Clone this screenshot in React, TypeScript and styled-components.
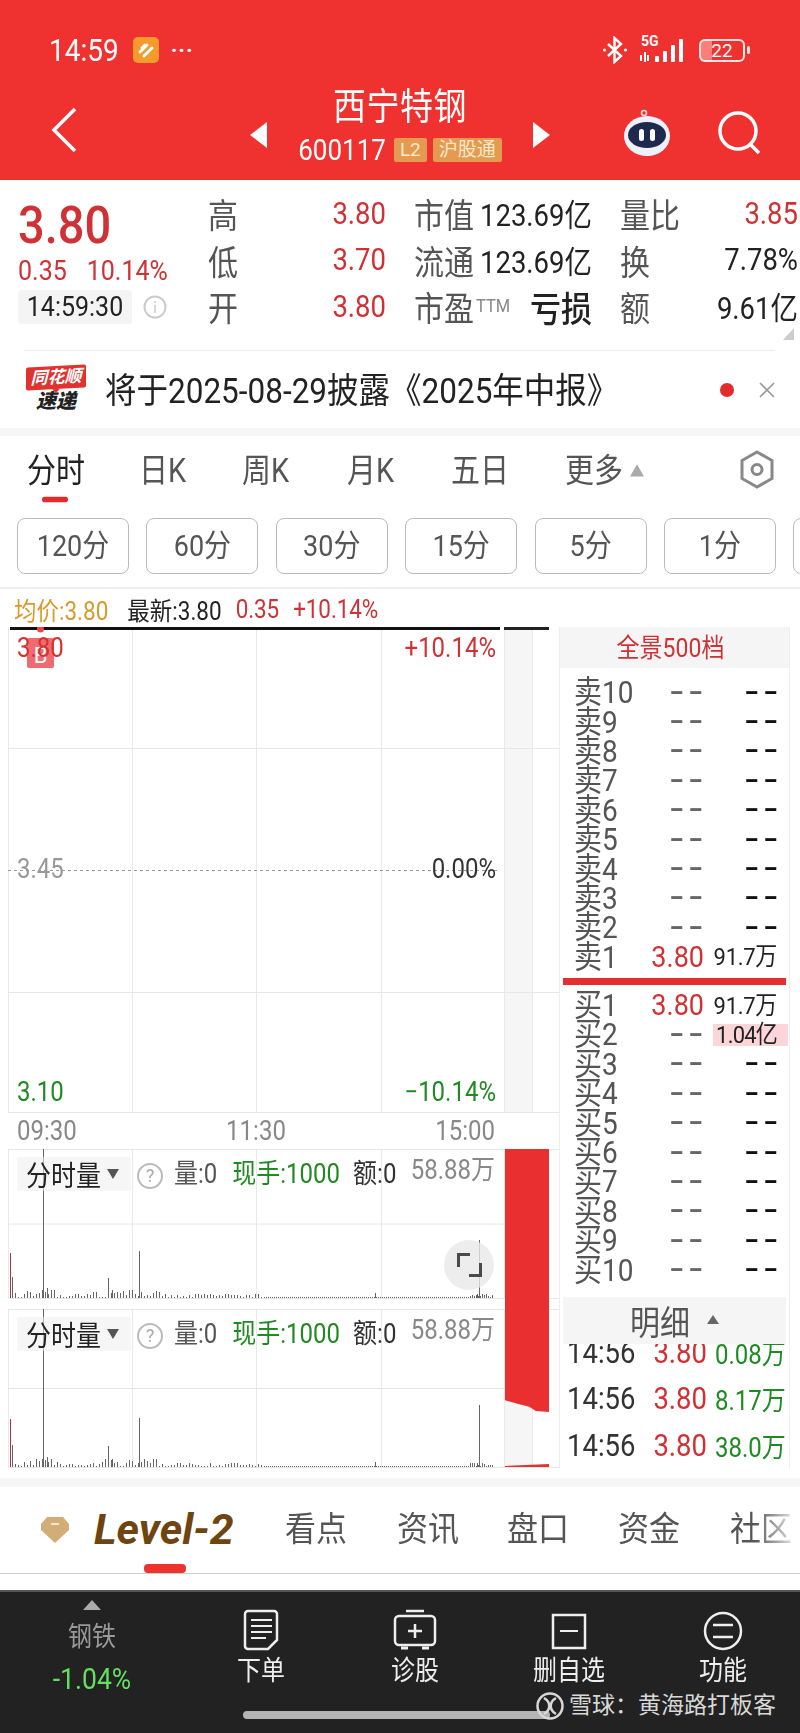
import React from 'react';
import styled, { createGlobalStyle, css } from 'styled-components';

const RED = '#ef3230';
const UP = '#cf3134';
const DOWN = '#1f8a22';

// the app's digits and glyphs run narrow and tall
const tall = css`
  display: inline-block;
  transform: scaleY(1.12);
`;

const GlobalStyle = createGlobalStyle`
  html, body {
    margin: 0;
    padding: 0;
    background: #fff;
  }
  body {
    font-family: Roboto, "Noto Sans CJK SC", sans-serif;
  }
`;

const Page = styled.div`
  position: relative;
  width: 800px;
  height: 1733px;
  overflow: hidden;
  display: flex;
  flex-direction: column;
  background: #fff;
`;

/* header */
const Header = styled.header`
  height: 180px;
  flex: none;
  background: ${RED};
  color: #fff;
`;

const StatusBar = styled.div`
  height: 92px;
  padding: 8px 55px 0 49px;
  box-sizing: border-box;
  display: flex;
  align-items: center;
`;

const Clock = styled.span`
  ${tall}
  font-size: 28px;
  margin-right: 14px;
`;

const StatusDots = styled.span`
  font-size: 22px;
  font-weight: 700;
  letter-spacing: 1px;
  margin-left: 12px;
`;

const StatusRight = styled.div`
  margin-left: auto;
  display: flex;
  align-items: center;
  gap: 12px;
`;

const Network = styled.div`
  position: relative;
  width: 46px;
  height: 28px;
`;

const FiveG = styled.span`
  position: absolute;
  left: 1px;
  top: -3px;
  font-size: 14px;
  font-weight: 700;
  line-height: 16px;
`;

const Battery = styled.div`
  position: relative;
  width: 46px;
  height: 23px;
  margin-left: 1px;
  border: 2px solid rgba(255, 255, 255, 0.85);
  border-radius: 6px;
  box-sizing: border-box;
  display: flex;
  align-items: center;
  justify-content: center;
  font-size: 19px;
  background: linear-gradient(90deg, #ff7f78 0 26%, transparent 26%);

  &::after {
    content: '';
    position: absolute;
    right: -7px;
    top: 5px;
    width: 3px;
    height: 8px;
    border-radius: 2px;
    background: rgba(255, 255, 255, 0.85);
  }
`;

const NavBar = styled.div`
  height: 88px;
  display: grid;
  grid-template-columns: 250px 300px 1fr;
  align-items: start;
`;

const BackSlot = styled.div`
  padding: 15px 0 0 50px;
`;

const NavCenter = styled.div`
  display: flex;
  align-items: center;
  justify-content: space-between;
`;

const Arrow = styled.div<{ $right?: boolean }>`
  width: 0;
  height: 0;
  margin-top: 10px;
  border-top: 13px solid transparent;
  border-bottom: 13px solid transparent;
  ${({ $right }) =>
    $right ? 'border-left: 17px solid #fff;' : 'border-right: 17px solid #fff;'}
`;

const TitleStack = styled.div`
  display: flex;
  flex-direction: column;
  align-items: center;
`;

const StockName = styled.div`
  ${tall}
  font-size: 33px;
  line-height: 40px;
  letter-spacing: 0.5px;
  margin-top: -4px;
`;

const CodeRow = styled.div`
  display: flex;
  align-items: center;
  gap: 6px;
  margin-top: 4px;
`;

const Code = styled.span`
  ${tall}
  font-size: 26px;
  line-height: 36px;
  margin-right: 2px;
`;

const Badge = styled.span`
  height: 24px;
  padding: 0 6px;
  background: #e59a52;
  color: #ffe9c9;
  font-size: 19px;
  line-height: 24px;
  border-radius: 2px;
`;

const NavRight = styled.div`
  display: flex;
  align-items: center;
  padding: 17px 0 0 72px;
  gap: 46px;
`;

/* quote summary */
const Quote = styled.section`
  height: 170px;
  flex: none;
  box-sizing: border-box;
  padding: 10px 0 0 18px;
  position: relative;
  display: flex;
`;

const QuoteLeft = styled.div`
  width: 190px;
  flex: none;
  padding-top: 5px;
`;

const BigPrice = styled.div`
  font-size: 47px;
  font-weight: 500;
  line-height: 60px;
  color: ${UP};
  transform: scaleY(1.12);
`;

const ChangeRow = styled.div`
  display: flex;
  gap: 20px;
  font-size: 25px;
  line-height: 34px;
  color: ${UP};
  margin-top: -1px;

  span {
    ${tall}
  }
`;

const TimeRow = styled.div`
  display: flex;
  align-items: center;
  gap: 11px;
  margin-top: 2px;
`;

const TimeChip = styled.div`
  width: 114px;
  height: 34px;
  background: #f4f4f4;
  border-radius: 4px;
  text-align: center;

  span {
    ${tall}
    font-size: 25px;
    line-height: 34px;
    color: #222;
  }
`;

const StatsGrid = styled.div`
  display: grid;
  grid-template-columns: repeat(3, 178px);
  grid-auto-rows: 46.5px;
  column-gap: 28px;
`;

const Stat = styled.div`
  display: flex;
  align-items: center;
  justify-content: space-between;
  white-space: nowrap;
`;

const StatLabel = styled.span`
  ${tall}
  font-size: 30px;
  color: #555;
`;

const Ttm = styled.span`
  display: inline-block;
  font-size: 16.5px;
  line-height: 20px;
  color: #888;
  margin-left: 2px;
  vertical-align: 8px;
`;

const StatValue = styled.span<{ $up?: boolean; $bold?: boolean }>`
  ${tall}
  font-size: ${({ $bold }) => ($bold ? '31px' : '27.5px')};
  font-weight: ${({ $bold }) => ($bold ? 500 : 400)};
  color: ${({ $up }) => ($up ? UP : '#222')};
`;

const CornerMark = styled.div`
  position: absolute;
  right: 6px;
  bottom: 10px;
  width: 0;
  height: 0;
  border-bottom: 12px solid #ccc;
  border-left: 11px solid transparent;
`;

/* notice */
const Notice = styled.section`
  height: 78px;
  flex: none;
  margin: 0 25px 0 24px;
  border-top: 1px solid #eee;
  box-sizing: border-box;
  display: flex;
  align-items: center;
`;

const Logo = styled.div`
  width: 60px;
  margin: 0 19px 0 2px;
  display: flex;
  flex-direction: column;
  align-items: center;
`;

const LogoTop = styled.div`
  position: relative;
  width: 60px;
  height: 23px;
  background: #e0322f;
  border-radius: 2px;
  color: #fff;
  font-size: 17px;
  line-height: 23px;
  font-weight: 700;
  font-style: italic;
  text-align: center;
  white-space: nowrap;
  transform: skewY(-3deg);

  &::after {
    content: '';
    position: absolute;
    left: 26px;
    bottom: -4px;
    border-top: 4px solid #e0322f;
    border-left: 4px solid transparent;
    border-right: 4px solid transparent;
  }
`;

const LogoBottom = styled.div`
  font-size: 20px;
  line-height: 24px;
  font-weight: 900;
  font-style: italic;
  color: #222;
`;

const NoticeBody = styled.div`
  flex: 1;
  margin-top: -6px;
  white-space: nowrap;
`;

const NoticeText = styled.span`
  ${tall}
  font-size: 31.5px;
  color: #222;
`;

const NoticeDot = styled.span`
  width: 14px;
  height: 14px;
  border-radius: 50%;
  background: #e32b2b;
  margin-right: 25px;
`;

const Band = styled.div<{ $height: number; $gap?: number }>`
  height: ${({ $height }) => $height}px;
  margin-top: ${({ $gap }) => $gap || 0}px;
  flex: none;
  background: #f6f6f6;
`;

/* chart tabs */
const ChartTabs = styled.nav`
  position: relative;
  height: 82px;
  flex: none;
`;

const ChartTab = styled.span<{ $left: number; $active?: boolean }>`
  position: absolute;
  left: ${({ $left }) => $left}px;
  top: 17px;
  font-size: 29px;
  line-height: 36px;
  white-space: nowrap;
  color: ${({ $active }) => ($active ? '#222' : '#555')};
  transform: scaleY(1.12);

  ${({ $active }) =>
    $active &&
    `&::after {
      content: '';
      position: absolute;
      left: 15px;
      top: 41px;
      width: 26px;
      height: 5px;
      border-radius: 3px;
      background: #e32b2b;
    }`}
`;

const MoreMark = styled.span`
  display: inline-block;
  width: 0;
  height: 0;
  margin-left: 7px;
  vertical-align: 5px;
  border-bottom: 11px solid #aaa;
  border-left: 7px solid transparent;
  border-right: 7px solid transparent;
`;

const SettingsIcon = styled.svg`
  position: absolute;
  left: 740px;
  top: 14px;
`;

const Periods = styled.div`
  height: 71px;
  flex: none;
  box-sizing: border-box;
  padding-left: 17px;
  border-bottom: 2px solid #eee;
  display: flex;
  gap: 17.4px;
  overflow: hidden;
`;

const PeriodButton = styled.div`
  flex: none;
  width: 112px;
  height: 56px;
  box-sizing: border-box;
  border: 1px solid #bbb;
  border-radius: 8px;
  text-align: center;
  color: #555;

  span {
    ${tall}
    font-size: 27px;
    line-height: 54px;
  }
`;

const Legend = styled.div`
  height: 38px;
  flex: none;
  box-sizing: border-box;
  padding: 1px 0 0 14px;
  display: flex;
  align-items: center;
  gap: 19px;
  font-size: 22.5px;
  white-space: nowrap;
`;

const LegendItem = styled.span<{ $color: string; $tight?: boolean }>`
  ${tall}
  color: ${({ $color }) => $color};
  ${({ $tight }) => $tight && 'margin-left: -5px; letter-spacing: -0.1px;'}
`;

/* market area */
const Market = styled.section`
  height: 841px;
  flex: none;
  display: flex;
`;

const ChartColumn = styled.div`
  position: relative;
  width: 559px;
  flex: none;
`;

const ChartBox = styled.div<{ $height: number }>`
  position: relative;
  height: ${({ $height }) => $height}px;

  svg {
    display: block;
  }
`;

const ChartLabel = styled.span<{ $color: string; $top: number; $right?: boolean }>`
  position: absolute;
  top: ${({ $top }) => $top}px;
  ${({ $right }) => ($right ? 'right: 63px;' : 'left: 17px;')}
  font-size: 24px;
  line-height: 30px;
  color: ${({ $color }) => $color};
  transform: scaleY(1.12);
`;

const TradeMark = styled.span`
  position: absolute;
  left: 27px;
  top: 11px;
  width: 27px;
  height: 30px;
  background: #ee6b70;
  border-radius: 2px;
  color: #fff;
  font-size: 22px;
  line-height: 36px;
  text-align: center;
`;

const TimeAxis = styled.div`
  height: 36px;
  box-sizing: border-box;
  padding: 0 64px 0 17px;
  display: flex;
  align-items: center;
  justify-content: space-between;
  font-size: 24px;
  color: #888;

  span {
    ${tall}
  }
`;

const VolumeHeader = styled.div`
  position: absolute;
  left: 17px;
  top: 8px;
  width: 478px;
  display: flex;
  align-items: flex-start;
  white-space: nowrap;
`;

const VolumeSelect = styled.div`
  width: 114px;
  height: 34px;
  box-sizing: border-box;
  padding-left: 9px;
  background: rgba(238, 238, 238, 0.55);
  border-radius: 3px;
  display: flex;
  align-items: center;
  font-size: 25px;
  color: #222;

  span:first-child {
    ${tall}
  }
`;

const SelectCaret = styled.span`
  width: 0;
  height: 0;
  margin-left: 6px;
  border-top: 10px solid #555;
  border-left: 6px solid transparent;
  border-right: 6px solid transparent;
`;

const HelpMark = styled.span`
  width: 22px;
  height: 22px;
  margin: 6px 11px 0 6px;
  flex: none;
  border: 2px solid #bbb;
  border-radius: 50%;
  color: #aaa;
  font-size: 18px;
  line-height: 22px;
  text-align: center;
`;

const VolumeField = styled.span<{ $color: string; $gap: number }>`
  ${tall}
  font-size: 24px;
  line-height: 34px;
  margin-right: ${({ $gap }) => $gap}px;
  color: ${({ $color }) => $color};
`;

const VolumeMax = styled.span`
  ${tall}
  margin-left: auto;
  margin-top: 1px;
  font-size: 24px;
  line-height: 24px;
  color: #888;
`;

const ExpandButton = styled.div`
  position: absolute;
  left: 444px;
  top: 91px;
  width: 50px;
  height: 50px;
  border-radius: 50%;
  background: rgba(232, 232, 232, 0.8);

  &::before,
  &::after {
    content: '';
    position: absolute;
    width: 10px;
    height: 11px;
    border: solid #4a4a4a;
  }
  &::before {
    left: 13px;
    top: 13px;
    border-width: 3px 0 0 3px;
  }
  &::after {
    right: 12px;
    bottom: 13px;
    border-width: 0 3px 3px 0;
  }
`;

const VolumeGap = styled.div`
  height: 10px;
`;

const RedBlock = styled.div`
  position: absolute;
  left: 505px;
  top: 522px;
  width: 44px;
  height: 263px;
  background: #e92f2f;
  clip-path: polygon(0 0, 100% 0, 100% 100%, 70% 99.6%, 55% 98%, 30% 97%, 0 95.5%);
`;

/* order book */
const Book = styled.div`
  width: 231px;
  flex: none;
  height: 841px;
  box-sizing: border-box;
  border-left: 1px solid #eee;
  border-right: 1px solid #eee;
  display: flex;
  flex-direction: column;
`;

const BookTitle = styled.div`
  height: 41px;
  flex: none;
  box-sizing: border-box;
  padding: 1px 8px 0 0;
  background: #f5f5f5;
  color: ${UP};
  line-height: 41px;
  text-align: center;

  span {
    ${tall}
    font-size: 23px;
  }
`;

const Levels = styled.div<{ $top: number }>`
  padding-top: ${({ $top }) => $top}px;
  flex: none;
`;

const Level = styled.div`
  height: 29.4px;
  padding-left: 14px;
  display: grid;
  grid-template-columns: 71px 59px 73px;
  align-items: center;
  white-space: nowrap;
`;

const LevelName = styled.span`
  ${tall}
  font-size: 28px;
  line-height: 29px;
  color: #555;
`;

const LevelPrice = styled.span`
  ${tall}
  font-size: 27px;
  line-height: 29px;
  text-align: right;
  color: ${UP};
`;

const LevelVolume = styled.div<{ $highlight?: boolean }>`
  height: 22px;
  font-size: 22px;
  line-height: 22px;
  letter-spacing: -0.3px;
  text-align: right;
  color: #222;
  ${({ $highlight }) =>
    $highlight &&
    'background: #fbd5d8; margin-right: -11px; padding-right: 11px; margin-left: 9px; letter-spacing: -0.8px;'}

  span {
    ${tall}
  }
`;

const Dash = styled.span<{ $dark?: boolean }>`
  display: block;
  font-size: 25px;
  line-height: 20px;
  font-weight: 700;
  text-align: right;
  letter-spacing: 2px;
  margin-right: ${({ $dark }) => ($dark ? -5 : -3)}px;
  color: ${({ $dark }) => ($dark ? '#111' : '#666')};
  transform: scaleX(1.6);
  transform-origin: right center;
`;

const BookDivider = styled.div`
  height: 7px;
  margin: 6px 3px 6px 3px;
  background: #e32f2f;
`;

const DetailHead = styled.div`
  height: 47px;
  flex: none;
  margin: 12px 3px 0;
  background: #f5f5f5;
  display: flex;
  align-items: center;
  justify-content: center;
  gap: 17px;
  font-size: 30px;
  color: #555;

  span:first-child {
    ${tall}
  }
`;

const DetailCaret = styled.span`
  width: 0;
  height: 0;
  margin-bottom: 2px;
  border-bottom: 9px solid #666;
  border-left: 6px solid transparent;
  border-right: 6px solid transparent;
`;

const Ticks = styled.div`
  flex: 1;
  min-height: 0;
  overflow: hidden;
`;

const Tick = styled.div<{ $first?: boolean }>`
  height: 46.5px;
  ${({ $first }) => $first && 'margin-top: -15px;'}
  padding: 0 6px 0 7px;
  display: grid;
  grid-template-columns: 1fr auto auto;
  align-items: center;
  white-space: nowrap;
  font-size: 27.5px;
`;

const TickTime = styled.span`
  ${tall}
  color: #333;
`;

const TickPrice = styled.span`
  ${tall}
  color: ${UP};
  margin-right: 8px;
`;

const TickVolume = styled.span`
  ${tall}
  width: 68px;
  font-size: 24px;
  text-align: right;
  color: ${DOWN};
`;

/* detail tabs */
const DetailTabs = styled.nav`
  height: 87px;
  flex: none;
  margin-bottom: 16px;
  box-sizing: border-box;
  border-bottom: 1px solid #ccc;
  position: relative;
  overflow: hidden;
`;

const GemIcon = styled.svg`
  position: absolute;
  left: 41px;
  top: 30px;
`;

const LevelTwo = styled.span`
  position: absolute;
  left: 94px;
  top: 17px;
  font-size: 43px;
  line-height: 50px;
  font-weight: 700;
  font-style: italic;
  color: #6e4510;

  &::after {
    content: '';
    position: absolute;
    left: 50px;
    top: 60px;
    width: 42px;
    height: 9px;
    border-radius: 4px;
    background: ${RED};
  }
`;

const DetailTab = styled.span<{ $left: number; $fade?: boolean }>`
  position: absolute;
  left: ${({ $left }) => $left}px;
  top: 22px;
  font-size: 31px;
  line-height: 42px;
  color: #555;
  transform: scaleY(1.1);
  ${({ $fade }) =>
    $fade &&
    `background: linear-gradient(90deg, #555 40%, #ddd 100%);
     -webkit-background-clip: text;
     background-clip: text;
     color: transparent;`}
`;

/* bottom bar */
const BottomBar = styled.footer`
  flex: 1;
  min-height: 0;
  box-sizing: border-box;
  border-top: 2px solid #555;
  background: #222;
  display: grid;
  grid-template-columns: 184px repeat(4, 154px);
  align-items: start;
  color: #eee;
`;

const SectorCell = styled.div`
  display: flex;
  flex-direction: column;
  align-items: center;
  padding-top: 8px;
`;

const SectorCaret = styled.span`
  width: 0;
  height: 0;
  border-bottom: 10px solid #aaa;
  border-left: 9px solid transparent;
  border-right: 9px solid transparent;
`;

const SectorName = styled.span`
  ${tall}
  margin-top: 10px;
  font-size: 24px;
  line-height: 34px;
  color: #999;
`;

const SectorChange = styled.span`
  ${tall}
  margin-top: 8px;
  font-size: 26.5px;
  line-height: 34px;
  color: #62e05f;
`;

const Action = styled.div`
  height: 96px;
  display: flex;
  flex-direction: column;
  align-items: center;
  justify-content: flex-end;
  gap: 3px;
`;

const ActionLabel = styled.span`
  ${tall}
  font-size: 24px;
  line-height: 34px;
`;

const Watermark = styled.div`
  position: absolute;
  left: 536px;
  top: 1691px;
  display: flex;
  align-items: center;
  gap: 5px;
  font-size: 23px;
  line-height: 30px;
  color: #d8d8d8;
  white-space: nowrap;
  z-index: 1;
`;

const HomeIndicator = styled.div`
  position: absolute;
  left: 243px;
  top: 1711px;
  width: 307px;
  height: 8px;
  border-radius: 4px;
  background: #b4b4b4;
`;

type Bar = { x: number; h: number; color?: string };

// small ripple along the base of the volume panes
const smallBars = (seed: number): Bar[] => {
  const bars: Bar[] = [];
  let s = seed;
  let x = 12;
  while (x < 493) {
    s = (s * 137 + 59) % 251;
    const busy = x < 60 || (x > 90 && x < 160);
    let h = 1 + (s % (busy ? 8 : 4));
    if (x > 262 && x < 470) h = 1;
    bars.push({ x, h });
    x += x > 262 ? 2 : 3;
  }
  return bars;
};

const tallBars = (height: number, last: number): Bar[] => [
  { x: 10, h: Math.round(height * 0.3), color: '#b5303f' },
  { x: 12, h: Math.round(height * 0.14) },
  { x: 43, h: height - 1 },
  { x: 47, h: 10 },
  { x: 108, h: Math.round(height * 0.13) },
  { x: 112, h: 8 },
  { x: 139, h: Math.round(height * 0.31) },
  { x: 375, h: 5 },
  { x: 477, h: 4 },
  { x: 479, h: last },
];

const GRID_X = [8, 132, 256, 381, 504, 532, 559];

function VolumeChart({ height, last, tail }: { height: number; last: number; tail?: boolean }) {
  const base = height - 1;
  const bars = [...smallBars(height), ...tallBars(height, last)];
  return (
    <svg width="559" height={height}>
      <rect x="504" width="28" height={height} fill="#f6f6f6" />
      {GRID_X.map((x) => (
        <line key={x} x1={x + 0.5} x2={x + 0.5} y1="0" y2={height} stroke="#e9e9e9" />
      ))}
      <line x1="8" x2="559" y1="0.5" y2="0.5" stroke="#e6e6e6" />
      <line x1="8" x2="504" y1={height / 2} y2={height / 2} stroke="#e6e6e6" />
      <line x1="8" x2="559" y1={base + 0.5} y2={base + 0.5} stroke="#e6e6e6" />
      {bars.map((bar, i) => (
        <line
          key={i}
          x1={bar.x + 0.5}
          x2={bar.x + 0.5}
          y1={base - bar.h}
          y2={base}
          stroke={bar.color || '#666'}
        />
      ))}
      {tail && <path d="M505 157l44-2v3h-44z" fill="#e23333" />}
    </svg>
  );
}

function VolumePane({ height, last, tail, children }: {
  height: number;
  last: number;
  tail?: boolean;
  children?: React.ReactNode;
}) {
  return (
    <ChartBox $height={height}>
      <VolumeChart height={height} last={last} tail={tail} />
      <VolumeHeader>
        <VolumeSelect>
          <span>分时量</span>
          <SelectCaret />
        </VolumeSelect>
        <HelpMark>?</HelpMark>
        <VolumeField $color="#555" $gap={15}>量:0</VolumeField>
        <VolumeField $color={DOWN} $gap={13}>现手:1000</VolumeField>
        <VolumeField $color="#333" $gap={0}>额:0</VolumeField>
        <VolumeMax>58.88万</VolumeMax>
      </VolumeHeader>
      {children}
    </ChartBox>
  );
}

function PriceChart() {
  return (
    <ChartBox $height={486}>
      <svg width="559" height="486">
        <rect x="504" width="28" height="486" fill="#f6f6f6" />
        {GRID_X.map((x) => (
          <line key={x} x1={x + 0.5} x2={x + 0.5} y1="0" y2="486" stroke="#e9e9e9" />
        ))}
        <line x1="8" x2="559" y1="121.5" y2="121.5" stroke="#e8e8e8" />
        <line x1="8" x2="559" y1="365.5" y2="365.5" stroke="#e8e8e8" />
        <line x1="8" x2="559" y1="485.5" y2="485.5" stroke="#e8e8e8" />
        <line x1="8" x2="500" y1="243.5" y2="243.5" stroke="#999" strokeDasharray="3 3" />
        <rect x="10" y="0" width="490" height="3" fill="#111" />
        <rect x="504" y="0" width="45" height="3" fill="#222" />
        <circle cx="40.5" cy="2" r="3.5" fill="#e8474a" />
      </svg>
      <TradeMark>B</TradeMark>
      <ChartLabel $color="#d8302f" $top={6}>3.80</ChartLabel>
      <ChartLabel $color={UP} $top={6} $right>+10.14%</ChartLabel>
      <ChartLabel $color="#999" $top={227}>3.45</ChartLabel>
      <ChartLabel $color="#333" $top={227} $right>0.00%</ChartLabel>
      <ChartLabel $color={DOWN} $top={450}>3.10</ChartLabel>
      <ChartLabel $color={DOWN} $top={450} $right>−10.14%</ChartLabel>
    </ChartBox>
  );
}

const SELLS = [10, 9, 8, 7, 6, 5, 4, 3, 2];
const BUYS = [3, 4, 5, 6, 7, 8, 9, 10];

function EmptyLevel({ name }: { name: string }) {
  return (
    <Level>
      <LevelName>{name}</LevelName>
      <Dash>--</Dash>
      <Dash $dark>--</Dash>
    </Level>
  );
}

function OrderBook() {
  return (
    <Book>
      <BookTitle><span>全景500档</span></BookTitle>
      <Levels $top={10}>
        {SELLS.map((n) => (
          <EmptyLevel key={n} name={`卖${n}`} />
        ))}
        <Level>
          <LevelName>卖1</LevelName>
          <LevelPrice>3.80</LevelPrice>
          <LevelVolume><span>91.7万</span></LevelVolume>
        </Level>
      </Levels>
      <BookDivider />
      <Levels $top={0}>
        <Level>
          <LevelName>买1</LevelName>
          <LevelPrice>3.80</LevelPrice>
          <LevelVolume><span>91.7万</span></LevelVolume>
        </Level>
        <Level>
          <LevelName>买2</LevelName>
          <Dash>--</Dash>
          <LevelVolume $highlight><span>1.04亿</span></LevelVolume>
        </Level>
        {BUYS.map((n) => (
          <EmptyLevel key={n} name={`买${n}`} />
        ))}
      </Levels>
      <DetailHead>
        <span>明细</span>
        <DetailCaret />
      </DetailHead>
      <Ticks>
        {['0.08万', '8.17万', '38.0万'].map((volume, i) => (
          <Tick key={volume} $first={i === 0}>
            <TickTime>14:56</TickTime>
            <TickPrice>3.80</TickPrice>
            <TickVolume>{volume}</TickVolume>
          </Tick>
        ))}
      </Ticks>
    </Book>
  );
}

const Stroke = { fill: 'none', stroke: '#eee', strokeWidth: 2.5 };

function DocIcon() {
  return (
    <svg width="38" height="42" viewBox="0 0 38 42">
      <path d="M6 2h26a3 3 0 0 1 3 3v26l-9 9H6a3 3 0 0 1-3-3V5a3 3 0 0 1 3-3z" {...Stroke} />
      <path d="M9 11h21M9 17h21M9 23h21M9 29h15" {...Stroke} strokeWidth="2" />
    </svg>
  );
}

function CaseIcon() {
  return (
    <svg width="44" height="42" viewBox="0 0 44 42">
      <path d="M13 2h18" {...Stroke} />
      <rect x="2" y="7" width="40" height="29" rx="4" {...Stroke} />
      <path d="M22 15v14M15 22h14" {...Stroke} />
      <path d="M8 39h7M29 39h7" {...Stroke} strokeWidth="3" />
    </svg>
  );
}

function MinusBoxIcon() {
  return (
    <svg width="36" height="38" viewBox="0 0 36 38">
      <rect x="2" y="2" width="32" height="33" {...Stroke} />
      <path d="M9 18h18" {...Stroke} strokeWidth="2" />
    </svg>
  );
}

function MenuIcon() {
  return (
    <svg width="40" height="40" viewBox="0 0 40 40">
      <circle cx="20" cy="20" r="18" {...Stroke} />
      <path d="M10 14h20M10 26h20" {...Stroke} />
    </svg>
  );
}

export default function App() {
  return (
    <Page>
      <GlobalStyle />
      <Header>
        <StatusBar>
          <Clock>14:59</Clock>
          <svg width="26" height="26" viewBox="0 0 26 26">
            <rect width="26" height="26" rx="5" fill="#f59b2b" />
            <path d="M7 15l7-7M11 19l8-8M9 11l3-3" stroke="#fff" strokeWidth="3" strokeLinecap="round" />
          </svg>
          <StatusDots>···</StatusDots>
          <StatusRight>
            <svg width="26" height="28" viewBox="0 0 26 28" fill="none" stroke="#fff" strokeWidth="2.4">
              <path d="M6 8l13 12-6.5 6V2L19 8 6 20" />
              <circle cx="2.5" cy="14" r="1.6" fill="#fff" stroke="none" />
              <circle cx="23.5" cy="14" r="1.6" fill="#fff" stroke="none" />
            </svg>
            <Network>
              <FiveG>5G</FiveG>
              <svg width="46" height="28" viewBox="0 0 46 28" fill="#fff">
                <rect x="0" y="19" width="2" height="6" />
                <rect x="4" y="16" width="2" height="10" />
                <rect x="7" y="19" width="2" height="6" />
                <rect x="15" y="20" width="4" height="6" rx="1" />
                <rect x="23" y="15" width="4" height="11" rx="1" />
                <rect x="31" y="9" width="4" height="17" rx="1" />
                <rect x="39" y="3" width="4" height="23" rx="1" />
              </svg>
            </Network>
            <Battery>22</Battery>
          </StatusRight>
        </StatusBar>
        <NavBar>
          <BackSlot>
            <svg width="28" height="46" viewBox="0 0 28 46" fill="none" stroke="#fff" strokeWidth="3.5">
              <path d="M25 2L4 23l21 21" />
            </svg>
          </BackSlot>
          <NavCenter>
            <Arrow />
            <TitleStack>
              <StockName>西宁特钢</StockName>
              <CodeRow>
                <Code>600117</Code>
                <Badge>L2</Badge>
                <Badge>沪股通</Badge>
              </CodeRow>
            </TitleStack>
            <Arrow $right />
          </NavCenter>
          <NavRight>
            <svg width="50" height="48" viewBox="0 0 50 48">
              <circle cx="22" cy="4" r="2.5" fill="none" stroke="#f6dede" strokeWidth="1.5" />
              <ellipse cx="25" cy="27" rx="23" ry="20" fill="#eef0fb" />
              <ellipse cx="25" cy="26" rx="19" ry="13" fill="#1d2a4d" />
              <rect x="17" y="20" width="5" height="12" rx="2.5" fill="#fff" />
              <rect x="28" y="20" width="5" height="12" rx="2.5" fill="#fff" />
            </svg>
            <svg width="44" height="44" viewBox="0 0 44 44" fill="none" stroke="#fff" strokeWidth="3.5">
              <circle cx="20" cy="20" r="18" />
              <path d="M32 33l9 9" />
            </svg>
          </NavRight>
        </NavBar>
      </Header>

      <Quote>
        <QuoteLeft>
          <BigPrice>3.80</BigPrice>
          <ChangeRow>
            <span>0.35</span>
            <span>10.14%</span>
          </ChangeRow>
          <TimeRow>
            <TimeChip><span>14:59:30</span></TimeChip>
            <svg width="24" height="24" viewBox="0 0 24 24" fill="none" stroke="#ccc" strokeWidth="2">
              <circle cx="12" cy="12" r="10.5" />
              <path d="M12 10v8M12 6v2" strokeWidth="1.5" />
            </svg>
          </TimeRow>
        </QuoteLeft>
        <StatsGrid>
          <Stat><StatLabel>高</StatLabel><StatValue $up>3.80</StatValue></Stat>
          <Stat><StatLabel>市值</StatLabel><StatValue>123.69亿</StatValue></Stat>
          <Stat><StatLabel>量比</StatLabel><StatValue $up>3.85</StatValue></Stat>
          <Stat><StatLabel>低</StatLabel><StatValue $up>3.70</StatValue></Stat>
          <Stat><StatLabel>流通</StatLabel><StatValue>123.69亿</StatValue></Stat>
          <Stat><StatLabel>换</StatLabel><StatValue>7.78%</StatValue></Stat>
          <Stat><StatLabel>开</StatLabel><StatValue $up>3.80</StatValue></Stat>
          <Stat><StatLabel>市盈<Ttm>TTM</Ttm></StatLabel><StatValue $bold>亏损</StatValue></Stat>
          <Stat><StatLabel>额</StatLabel><StatValue>9.61亿</StatValue></Stat>
        </StatsGrid>
        <CornerMark />
      </Quote>

      <Notice>
        <Logo>
          <LogoTop>同花顺</LogoTop>
          <LogoBottom>速递</LogoBottom>
        </Logo>
        <NoticeBody>
          <NoticeText>将于2025-08-29披露《2025年中报》</NoticeText>
        </NoticeBody>
        <NoticeDot />
        <svg width="16" height="16" viewBox="0 0 16 16" stroke="#999" strokeWidth="1.6">
          <path d="M1 1l14 14M15 1L1 15" />
        </svg>
      </Notice>
      <Band $height={8} />

      <ChartTabs>
        <ChartTab $left={27} $active>分时</ChartTab>
        <ChartTab $left={139}>日K</ChartTab>
        <ChartTab $left={242}>周K</ChartTab>
        <ChartTab $left={347}>月K</ChartTab>
        <ChartTab $left={451}>五日</ChartTab>
        <ChartTab $left={565}>更多<MoreMark /></ChartTab>
        <SettingsIcon width="34" height="40" viewBox="0 0 34 40" fill="none" stroke="#888" strokeWidth="3">
          <path d="M17 2l15 8.500v18L17 37 2 28.500V10.500z" />
          <circle cx="17" cy="19.500" r="5" />
        </SettingsIcon>
      </ChartTabs>

      <Periods>
        {['120分', '60分', '30分', '15分', '5分', '1分', ''].map((label) => (
          <PeriodButton key={label}><span>{label}</span></PeriodButton>
        ))}
      </Periods>

      <Legend>
        <LegendItem $color="#d99a2b">均价:3.80</LegendItem>
        <LegendItem $color="#222">最新:3.80</LegendItem>
        <LegendItem $color={UP} $tight>0.35</LegendItem>
        <LegendItem $color={UP} $tight>+10.14%</LegendItem>
      </Legend>

      <Market>
        <ChartColumn>
          <PriceChart />
          <TimeAxis>
            <span>09:30</span>
            <span>11:30</span>
            <span>15:00</span>
          </TimeAxis>
          <VolumePane height={150} last={58}>
            <ExpandButton />
          </VolumePane>
          <VolumeGap />
          <VolumePane height={159} last={62} tail />
          <RedBlock />
        </ChartColumn>
        <OrderBook />
      </Market>

      <Band $height={9} $gap={10} />

      <DetailTabs>
        <GemIcon width="28" height="26" viewBox="0 0 28 26">
          <path d="M6 0h16l6 7v6L14 26 0 13V7z" fill="#d3ad77" />
          <path d="M10 7h8" stroke="#f4e6cf" strokeWidth="2" />
        </GemIcon>
        <LevelTwo>Level-2</LevelTwo>
        <DetailTab $left={285}>看点</DetailTab>
        <DetailTab $left={397}>资讯</DetailTab>
        <DetailTab $left={507}>盘口</DetailTab>
        <DetailTab $left={618}>资金</DetailTab>
        <DetailTab $left={730} $fade>社区</DetailTab>
      </DetailTabs>

      <BottomBar>
        <SectorCell>
          <SectorCaret />
          <SectorName>钢铁</SectorName>
          <SectorChange>-1.04%</SectorChange>
        </SectorCell>
        <Action><DocIcon /><ActionLabel>下单</ActionLabel></Action>
        <Action><CaseIcon /><ActionLabel>诊股</ActionLabel></Action>
        <Action><MinusBoxIcon /><ActionLabel>删自选</ActionLabel></Action>
        <Action><MenuIcon /><ActionLabel>功能</ActionLabel></Action>
      </BottomBar>

      <HomeIndicator />
      <Watermark>
        <svg width="28" height="28" viewBox="0 0 28 28" fill="none" stroke="#d8d8d8" strokeWidth="2.5">
          <circle cx="14" cy="14" r="12.5" />
          <path d="M8 6c7 4 7 12 0 16M20 6c-7 4-7 12 0 16" />
        </svg>
        <span>雪球：黄海路打板客</span>
      </Watermark>
    </Page>
  );
}
